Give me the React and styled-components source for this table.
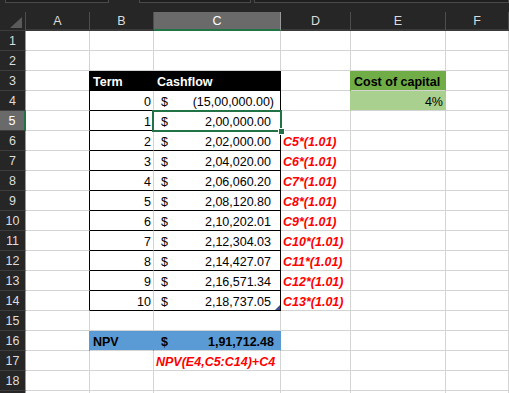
import { Fragment } from 'react'
import styled, { createGlobalStyle } from 'styled-components'

const GRID = '#d4d4d4';
const BLACK = '#000';
const GREEN = '#217346';
const HEAD_BG = '#262626';
const SEL_BG = '#6a6a6a';

const GlobalStyle = createGlobalStyle`
  html, body {
    margin: 0;
    padding: 0;
    background: ${HEAD_BG};
  }
  body {
    font-family: "Liberation Sans", Arial, sans-serif;
    overflow: hidden;
  }
`;

const Window = styled.div`
  width: 509px;
  height: 393px;
  overflow: hidden;
  background: ${HEAD_BG};
  display: flex;
  flex-direction: column;
`;

const TopStrip = styled.div`
  height: 12px;
  flex: none;
  display: flex;
  align-items: flex-start;
`;

const StripBox = styled.div`
  height: 2px;
  width: ${p => p.$w};
  flex: ${p => p.$grow ? 1 : 'none'};
  margin-left: ${p => p.$ml};
  background: #1e1e1e;
  border: 1px solid #4a4a4a;
  border-top: none;
`;

const Sheet = styled.div`
  display: grid;
  grid-template-columns: 26px 64px 64px 127px 70px 95px 1fr;
  grid-template-rows: 19px;
  grid-auto-rows: 20px;
  font-size: 12.5px;
`;

const Corner = styled.div`
  display: flex;
  justify-content: flex-end;
  align-items: flex-end;
  padding: 0 3px 2px 0;
  border-right: 1px solid #4d4d4d;
  border-bottom: 1px solid #3d3d3d;
`;

const CornerTriangle = styled.div`
  width: 0;
  height: 0;
  border-left: 12px solid transparent;
  border-bottom: 11px solid #5a5a5a;
`;

const ColHead = styled.div`
  display: flex;
  align-items: center;
  justify-content: center;
  padding-top: 1px;
  background: ${p => p.$sel ? SEL_BG : HEAD_BG};
  color: ${p => p.$sel ? '#fff' : '#dcdcdc'};
  border-right: 1px solid ${p => p.$sel ? '#9a9a9a' : '#4d4d4d'};
  border-bottom: 2px solid ${p => p.$sel ? GREEN : '#3a3a3a'};
`;

const RowHead = styled.div`
  display: flex;
  align-items: center;
  justify-content: center;
  padding-top: 1px;
  background: ${p => p.$sel ? SEL_BG : HEAD_BG};
  color: ${p => p.$sel ? '#fff' : '#dcdcdc'};
  border-bottom: 1px solid #3d3d3d;
  border-right: ${p => p.$sel ? `2px solid ${GREEN}` : '1px solid #9a9a9a'};
`;

const Cell = styled.div`
  position: relative;
  display: flex;
  align-items: flex-end;
  justify-content: ${p => p.$align === 'right' ? 'flex-end' : p.$align === 'between' ? 'space-between' : 'flex-start'};
  padding: ${p => p.$align === 'between' ? '0 6px 0 7px' : p.$italic ? '0 2px 0 2px' : '0 2px 0 3px'};
  background: ${p => p.$fill || '#fff'};
  box-shadow: ${p => p.$fill ? `-1px 0 0 ${p.$fill}` : 'none'};
  border-right: 1px solid ${p => p.$rb || p.$fill || GRID};
  border-bottom: 1px solid ${p => p.$bb || GRID};
  color: ${p => p.$color || '#000'};
  font-weight: ${p => p.$bold ? 700 : 400};
  font-style: ${p => p.$italic ? 'italic' : 'normal'};
  line-height: 16px;
  white-space: nowrap;
  min-width: 0;
`;

const Amount = styled.span`
  display: inline-flex;
`;

const Paren = styled.span`
  display: inline-block;
  width: 3px;
  overflow: hidden;
  visibility: hidden;
`;

const Selection = styled.div`
  position: absolute;
  top: -1px;
  left: -2px;
  right: -2px;
  bottom: -2px;
  border: 2px solid ${GREEN};
  z-index: 2;
  pointer-events: none;
`;

const FillHandle = styled.div`
  position: absolute;
  right: -5px;
  bottom: -5px;
  width: 5px;
  height: 5px;
  background: ${GREEN};
  border: 1px solid #fff;
`;

const CornerMark = styled.div`
  position: absolute;
  right: 0;
  bottom: 0;
  width: 0;
  height: 0;
  border-left: 5px solid transparent;
  border-bottom: 5px solid #3d4f8f;
`;

const COLS = ['A', 'B', 'C', 'D', 'E', 'F'];

const flows = [
  '(15,00,000.00)', '2,00,000.00', '2,02,000.00', '2,04,020.00', '2,06,060.20',
  '2,08,120.80', '2,10,202.01', '2,12,304.03', '2,14,427.07', '2,16,571.34', '2,18,737.05',
];

const RED = '#ff0000';

function cellFor(col, row) {
  const key = col + row;
  if (key === 'B3') return { text: 'Term', $fill: BLACK, $color: '#fff', $bold: true, $bb: BLACK };
  if (key === 'C3') return { text: 'Cashflow', $fill: BLACK, $color: '#fff', $bold: true, $bb: BLACK };
  if (key === 'E3') return { text: 'Cost of capital', $fill: '#70ad47', $bold: true };
  if (key === 'E4') return { text: '4%', $fill: '#a9d08e', $align: 'right' };
  if (row >= 4 && row <= 14) {
    const term = row - 4;
    if (col === 'A') return { $rb: BLACK };
    if (col === 'B') return { text: String(term), $align: 'right', $bb: BLACK };
    if (col === 'C') return { acct: flows[term], neg: term === 0, $rb: BLACK, $bb: BLACK, $align: 'between', sel: row === 5, mark: row === 14 };
    if (col === 'D' && row >= 6) return { text: `C${row - 1}*(1.01)`, $color: RED, $bold: true, $italic: true };
  }
  if (key === 'B16') return { text: 'NPV', $fill: '#5b9bd5', $bold: true };
  if (key === 'C16') return { acct: '1,91,712.48', total: true, $fill: '#5b9bd5', $bold: true, $align: 'between' };
  if (key === 'C17') return { text: 'NPV(E4,C5:C14)+C4', $color: RED, $bold: true, $italic: true };
  return {};
}

const SheetCell = ({ col, row }) => {
  const { text, acct, neg, total, sel, mark, ...style } = cellFor(col, row);
  return (
    <Cell {...style}>
      {acct ? (
        <>
          <span>$</span>
          <Amount>{acct}{!neg && !total && <Paren>)</Paren>}</Amount>
        </>
      ) : text}
      {sel && <Selection><FillHandle /></Selection>}
      {mark && <CornerMark />}
    </Cell>
  );
};

const ROWS = Array.from({ length: 19 }, (_, i) => i + 1);

export default function App() {
  return (
    <Window>
      <GlobalStyle />
      <TopStrip>
        <StripBox $ml="5px" $w="102px" />
        <StripBox $ml="30px" $w="110px" />
        <StripBox $ml="3px" $grow />
      </TopStrip>
      <Sheet>
        <Corner><CornerTriangle /></Corner>
        {COLS.map(c => (
          <ColHead key={c} $sel={c === 'C'}>{c}</ColHead>
        ))}
        {ROWS.map(r => (
          <Fragment key={r}>
            <RowHead $sel={r === 5}>{r}</RowHead>
            {COLS.map(c => <SheetCell key={c + r} col={c} row={r} />)}
          </Fragment>
        ))}
      </Sheet>
    </Window>
  );
}
